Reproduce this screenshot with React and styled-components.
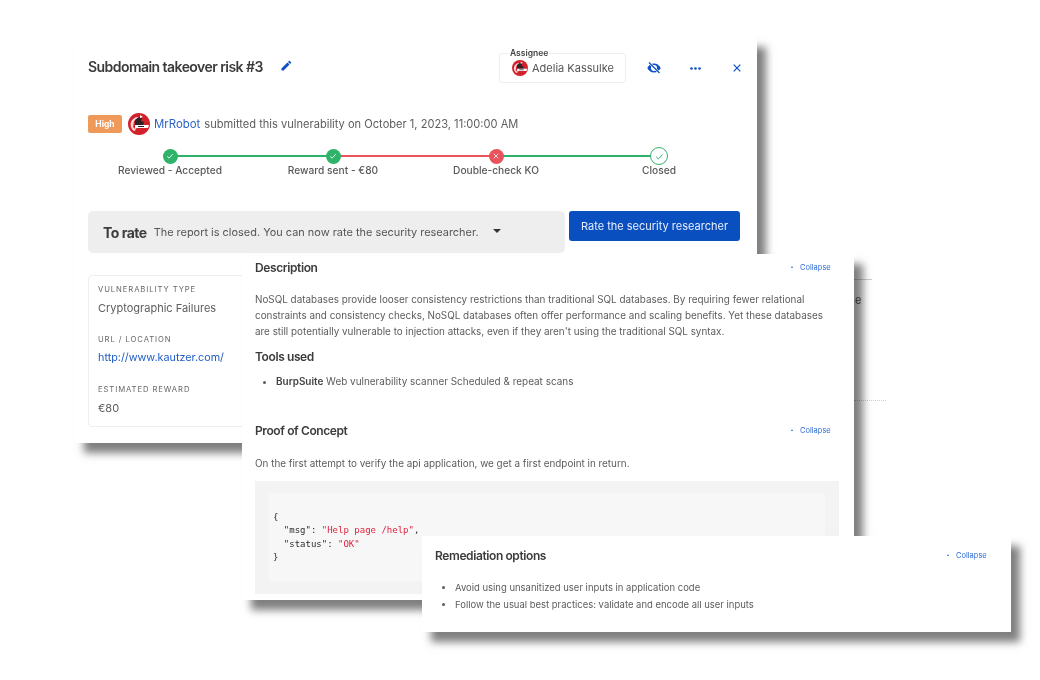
import styled, { createGlobalStyle } from 'styled-components'

const GlobalStyle = createGlobalStyle`
  html, body { margin: 0; padding: 0; background: #fff; }
  body { font-family: Inter, 'Noto Sans', sans-serif; color: #555; }
`

const Canvas = styled.div`
  position: relative;
  width: 1040px;
  height: 680px;
  overflow: hidden;
  background: #fff;
  filter: blur(0.35px);
`

const Sheet = styled.section`
  position: absolute;
  left: ${p => p.$x}px;
  top: ${p => p.$y}px;
  width: ${p => p.$w}px;
  height: ${p => p.$h}px;
  box-sizing: border-box;
  background: #fff;
  box-shadow: 9px 10px 8px rgba(0, 0, 0, 0.5);
  padding: ${p => p.$pad};
`

const Stray = styled.div`
  position: absolute;
  left: 854px;
  top: ${p => p.$y}px;
  width: ${p => p.$w}px;
  border-top: 1px ${p => p.$dotted ? 'dotted' : 'solid'} #cfcfcf;
`

const StrayLetter = styled.span`
  position: absolute;
  left: 855px;
  top: 293px;
  font-size: 11px;
  color: #555;
`

const Header = styled.header`
  display: flex;
  align-items: center;
  height: 30px;
`

const Title = styled.h1`
  margin: -3px 0 0;
  font-size: 14px;
  font-weight: 600;
  letter-spacing: -0.55px;
  color: #3b3b3b;
`

const EditButton = styled.span`
  display: flex;
  margin-left: 18px;
  margin-top: -5px;
  color: #0b50c4;
`

const Assignee = styled.div`
  position: relative;
  display: flex;
  align-items: center;
  gap: 4px;
  box-sizing: border-box;
  width: 127px;
  height: 30px;
  margin-left: auto;
  padding-left: 12px;
  border: 1px solid #eee;
  border-radius: 3px;
  font-size: 11px;
  color: #555;
`

const AssigneeLabel = styled.span`
  position: absolute;
  left: 9px;
  top: -6px;
  padding: 0 1px;
  background: #fff;
  font-size: 8.5px;
  line-height: 11px;
  font-weight: 600;
  color: #444;
`

const IconButton = styled.span`
  display: flex;
  justify-content: center;
  width: 16px;
  margin-left: ${p => p.$gap}px;
  color: #0b50c4;
`

const MetaRow = styled.div`
  display: flex;
  align-items: center;
  height: 22px;
  margin-top: 30px;
  font-size: 11.1px;
  color: #5d5d5d;
`

const Badge = styled.span`
  display: flex;
  align-items: center;
  justify-content: center;
  width: 34px;
  height: 18px;
  margin-right: 6px;
  border-radius: 2px;
  background: #ef9a5b;
  color: #fff;
  font-size: 8.5px;
  font-weight: 700;
`

const UserLink = styled.a`
  margin: 0 4px;
  font-size: 11.4px;
  color: #2a63c9;
`

const Stepper = styled.div`
  display: grid;
  grid-template-columns: repeat(4, 163px);
  margin: 12px 0 0 0.5px;
`

const Step = styled.div`
  position: relative;
  display: flex;
  flex-direction: column;
  align-items: center;
  height: 32px;
  font-size: 10.2px;
  font-weight: 500;
  color: #595959;

  &::after {
    content: '';
    display: ${p => p.$line ? 'block' : 'none'};
    position: absolute;
    left: 50%;
    top: 8px;
    width: 100%;
    height: 2px;
    background: ${p => p.$line};
  }
`

const StepDot = styled.span`
  position: relative;
  z-index: 1;
  display: flex;
  align-items: center;
  justify-content: center;
  box-sizing: border-box;
  width: ${p => p.$outline ? 18 : 15}px;
  height: ${p => p.$outline ? 18 : 15}px;
  margin: ${p => p.$outline ? 0 : '1.5px 0'};
  border-radius: 50%;
  border: ${p => p.$outline ? `1.5px solid ${p.$color}` : 'none'};
  background: ${p => p.$outline ? '#fff' : p.$color};
  color: ${p => p.$outline ? p.$color : '#fff'};
`

const StepLabel = styled.span`
  margin-top: -2px;
  line-height: 14px;
  white-space: nowrap;
`

const RateRow = styled.div`
  display: flex;
  gap: 4px;
  margin-top: 32px;
`

const RateBanner = styled.div`
  display: flex;
  align-items: center;
  box-sizing: border-box;
  width: 477px;
  height: 42px;
  padding: 0 15px;
  border-radius: 5px;
  background: #eee;
  font-size: 10.95px;
  color: #555;
`

const RateTitle = styled.strong`
  margin-right: 7px;
  font-size: 14px;
  font-weight: 700;
  letter-spacing: -0.5px;
  color: #3d3d3d;
`

const Caret = styled.span`
  width: 0;
  height: 0;
  margin: -2px 0 0 14px;
  border-left: 4px solid transparent;
  border-right: 4px solid transparent;
  border-top: 4px solid #333;
`

const RateButton = styled.button`
  width: 171px;
  height: 30px;
  padding: 0;
  border: none;
  border-radius: 3px;
  background: #0a4fc0;
  color: #e8eefb;
  font: 400 11px Inter, sans-serif;
`

const InfoBox = styled.dl`
  box-sizing: border-box;
  width: 300px;
  height: 152px;
  margin: 22px 0 0;
  padding: 8px 9px;
  border: 1px solid #eee;
  border-radius: 4px;
`

const InfoLabel = styled.dt`
  height: 12px;
  font-size: 7.7px;
  line-height: 12px;
  letter-spacing: 0.9px;
  text-transform: uppercase;
  color: #666;
`

const InfoValue = styled.dd`
  height: 20px;
  margin: 2px 0 16px;
  font-size: ${p => p.$link ? 10.8 : 11}px;
  line-height: 20px;
  color: ${p => p.$link ? '#1f5cc6' : '#5d5d5d'};

  &:last-child { margin-bottom: 0; }
`

const SectionHead = styled.div`
  display: flex;
  align-items: center;
  justify-content: space-between;
  height: 16px;
  margin-top: ${p => p.$top || 0}px;
  padding-right: ${p => p.$inset || 0}px;
`

const SectionTitle = styled.h2`
  margin: 0;
  font-size: 12px;
  font-weight: 600;
  letter-spacing: -0.4px;
  color: #3b3b3b;
`

const Collapse = styled.a`
  display: flex;
  align-items: center;
  gap: 7px;
  width: 40px;
  font-size: 7.5px;
  color: #2f6bd6;
  white-space: nowrap;
`

const CollapseMark = styled.span`
  width: 0;
  height: 0;
  border-left: 1.5px solid transparent;
  border-right: 1.5px solid transparent;
  border-bottom: 2px solid #2f6bd6;
`

const Body = styled.p`
  margin: ${p => p.$top}px 0 0;
  width: 575px;
  font-size: 9.9px;
  line-height: 16px;
  color: #5c5c5c;
`

const SubTitle = styled(SectionTitle)`
  margin-top: ${p => p.$top}px;
`

const BulletList = styled.ul`
  margin: ${p => p.$top}px 0 0;
  padding-left: ${p => p.$indent}px;
  font-size: ${p => p.$size}px;
  line-height: ${p => p.$leading}px;
  color: #5c5c5c;

  strong { font-weight: 600; color: #444; }
`

const CodeOuter = styled.div`
  box-sizing: border-box;
  width: 584px;
  height: 113px;
  margin-top: 10px;
  padding: 12px 14px;
  background: #f3f3f3;
`

const CodeInner = styled.div`
  box-sizing: border-box;
  height: 88px;
  padding: 18px 4px;
  background: #f7f7f7;
  font: 9px/13.3px 'DejaVu Sans Mono', monospace;
  color: #2b2b2b;
`

const CodeLine = styled.div`
  height: 13.3px;
  white-space: pre;
`

const CodeString = styled.span`
  color: #e01e3c;
`

const RobotAvatar = ({ size }) => (
  <svg width={size} height={size} viewBox="0 0 22 22" style={{ flexShrink: 0 }}>
    <circle cx="11" cy="11" r="11" fill="#d3212b" />
    <path d="M3 9c1-3 4-5 7-5l-1 2-3 2-1 6 3 3-2 1c-3-2-4-6-3-9z" fill="#f4d9da" />
    <path d="M7 7c2-2 4-3 7-2l-1 3 3 1-1 3H7z" fill="#2c2226" />
    <path d="M7 12h14l-1 3H9l-2 1z" fill="#fff" />
    <path d="M10 13h6v1h-6z" fill="#2c2226" />
    <path d="M12 2l3 2-3 1z" fill="#fff" />
  </svg>
)

const Check = ({ size = 8 }) => (
  <svg width={size} height={size} viewBox="0 0 10 10" fill="none" stroke="currentColor" strokeWidth="1.1">
    <path d="M1.5 5.5l2.3 2.2 4.7-5" />
  </svg>
)

const Cross = () => (
  <svg width="6" height="6" viewBox="0 0 8 8" fill="none" stroke="currentColor" strokeWidth="1.1">
    <path d="M1 1l6 6M7 1l-6 6" />
  </svg>
)

const Pencil = () => (
  <svg width="11" height="11" viewBox="0 0 12 12" fill="currentColor">
    <path d="M0.5 9.2V11.5H2.8L9.3 5 7 2.7zM10.9 3.4c.3-.3.3-.7 0-.9L9.5 1.1c-.3-.3-.7-.3-.9 0L7.6 2.1 9.9 4.4z" />
  </svg>
)

const EyeOff = () => (
  <svg width="14" height="12" viewBox="0 0 14 12" fill="currentColor">
    <path d="M7 1.5C4 1.5 1.5 3.4.3 6c1.2 2.6 3.7 4.5 6.7 4.5S12.5 8.6 13.7 6C12.5 3.4 10 1.5 7 1.5zM7 9a3 3 0 1 1 0-6 3 3 0 0 1 0 6z" />
    <path d="M2 .5l10.5 10.5" stroke="#fff" strokeWidth="2.4" />
    <path d="M2 .5l10.5 10.5" stroke="currentColor" strokeWidth="1.2" />
  </svg>
)

const Dots = () => (
  <svg width="11" height="3" viewBox="0 0 11 3" fill="currentColor">
    <circle cx="1.5" cy="1.5" r="1.3" />
    <circle cx="5.5" cy="1.5" r="1.3" />
    <circle cx="9.5" cy="1.5" r="1.3" />
  </svg>
)

const Close = () => (
  <svg width="8" height="8" viewBox="0 0 8 8" fill="none" stroke="currentColor" strokeWidth="1.2">
    <path d="M.7.7l6.6 6.6M7.3.7L.7 7.3" />
  </svg>
)

const GREEN = '#2fb36a'
const RED = '#e8535c'

const steps = [
  { label: 'Reviewed - Accepted', color: GREEN, line: GREEN, icon: <Check /> },
  { label: 'Reward sent - €80', color: GREEN, line: RED, icon: <Check /> },
  { label: 'Double-check KO', color: RED, line: GREEN, icon: <Cross /> },
  { label: 'Closed', color: GREEN, outline: true, icon: <Check size={9} /> },
]

const CollapseLink = () => (
  <Collapse>
    <CollapseMark />
    Collapse
  </Collapse>
)

export default function App() {
  return (
    <>
      <GlobalStyle />
      <Canvas>
        <Sheet $x={75} $y={37} $w={682} $h={406} $pad="16px 12px 0 13px">
          <Header>
            <Title>Subdomain takeover risk #3</Title>
            <EditButton><Pencil /></EditButton>
            <Assignee>
              <AssigneeLabel>Assignee</AssigneeLabel>
              <RobotAvatar size={16} />
              Adelia Kassulke
            </Assignee>
            <IconButton $gap={20}><EyeOff /></IconButton>
            <IconButton $gap={25}><Dots /></IconButton>
            <IconButton $gap={26}><Close /></IconButton>
          </Header>
          <MetaRow>
            <Badge>High</Badge>
            <RobotAvatar size={22} />
            <UserLink>MrRobot</UserLink>
            submitted this vulnerability on October 1, 2023, 11:00:00 AM
          </MetaRow>
          <Stepper>
            {steps.map(step => (
              <Step key={step.label} $line={step.line}>
                <StepDot $color={step.color} $outline={step.outline}>{step.icon}</StepDot>
                <StepLabel>{step.label}</StepLabel>
              </Step>
            ))}
          </Stepper>
          <RateRow>
            <RateBanner>
              <RateTitle>To rate</RateTitle>
              The report is closed. You can now rate the security researcher.
              <Caret />
            </RateBanner>
            <RateButton>Rate the security researcher</RateButton>
          </RateRow>
          <InfoBox>
            <InfoLabel>Vulnerability type</InfoLabel>
            <InfoValue>Cryptographic Failures</InfoValue>
            <InfoLabel>URL / Location</InfoLabel>
            <InfoValue $link>http://www.kautzer.com/</InfoValue>
            <InfoLabel>Estimated reward</InfoLabel>
            <InfoValue>€80</InfoValue>
          </InfoBox>
        </Sheet>

        <Stray $y={279} $w={18} />
        <StrayLetter>e</StrayLetter>
        <Stray $y={400} $w={32} $dotted />

        <Sheet $x={242} $y={254} $w={612} $h={346} $pad="5px 15px 0 13px">
          <SectionHead $inset={8}>
            <SectionTitle>Description</SectionTitle>
            <CollapseLink />
          </SectionHead>
          <Body $top={16}>
            NoSQL databases provide looser consistency restrictions than traditional SQL databases. By requiring fewer relational
            constraints and consistency checks, NoSQL databases often offer performance and scaling benefits. Yet these databases
            are still potentially vulnerable to injection attacks, even if they aren't using the traditional SQL syntax.
          </Body>
          <SubTitle $top={10}>Tools used</SubTitle>
          <BulletList $top={9} $indent={21} $leading={16} $size={9.95}>
            <li><strong>BurpSuite</strong> Web vulnerability scanner Scheduled &amp; repeat scans</li>
          </BulletList>
          <SectionHead $top={33} $inset={8}>
            <SectionTitle>Proof of Concept</SectionTitle>
            <CollapseLink />
          </SectionHead>
          <Body $top={17}>On the first attempt to verify the api application, we get a first endpoint in return.</Body>
          <CodeOuter>
            <CodeInner>
              <CodeLine>{'{'}</CodeLine>
              <CodeLine>{'  "msg": '}<CodeString>"Help page /help"</CodeString>,</CodeLine>
              <CodeLine>{'  "status": '}<CodeString>"OK"</CodeString></CodeLine>
              <CodeLine>{'}'}</CodeLine>
            </CodeInner>
          </CodeOuter>
        </Sheet>

        <Sheet $x={422} $y={536} $w={589} $h={96} $pad="11px 24px 0 13px">
          <SectionHead>
            <SectionTitle>Remediation options</SectionTitle>
            <CollapseLink />
          </SectionHead>
          <BulletList $top={16} $indent={20} $leading={17} $size={9.47}>
            <li>Avoid using unsanitized user inputs in application code</li>
            <li>Follow the usual best practices: validate and encode all user inputs</li>
          </BulletList>
        </Sheet>
      </Canvas>
    </>
  )
}
